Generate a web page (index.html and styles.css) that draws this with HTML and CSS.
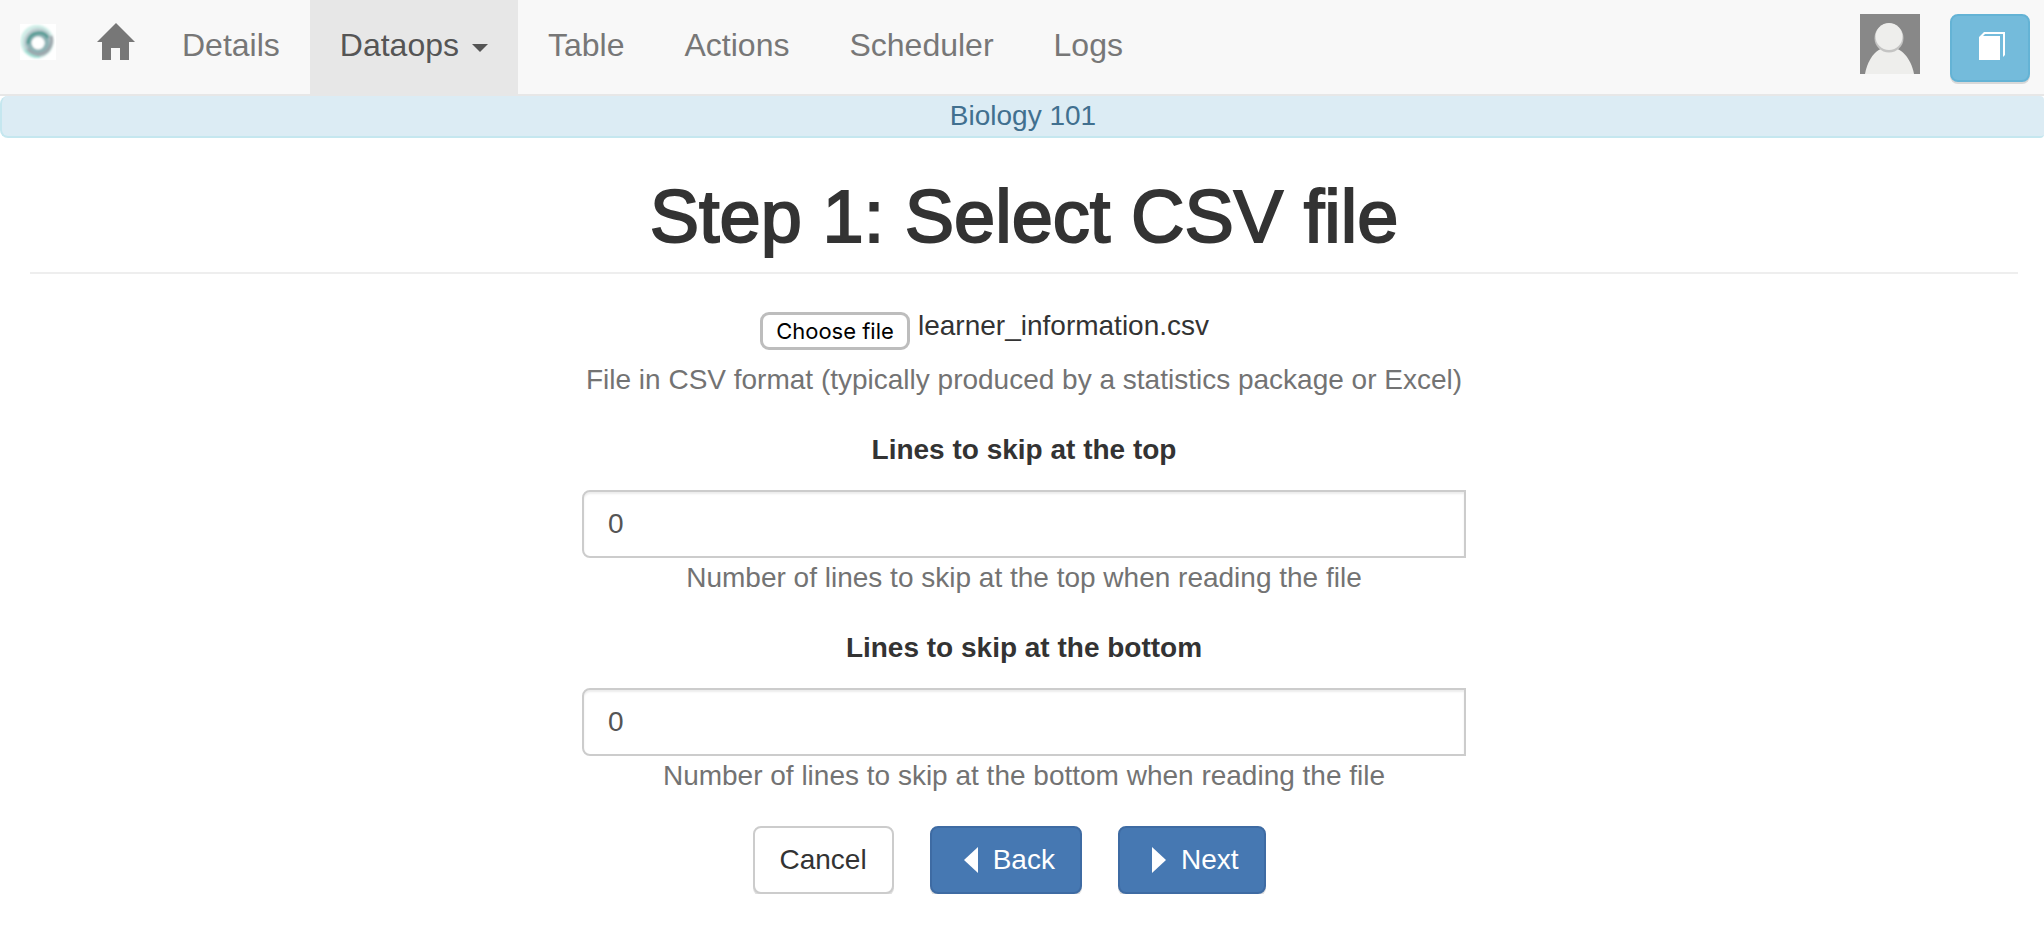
FILE: index.html
```html
<!DOCTYPE html>
<html lang="en">
<head>
<meta charset="utf-8">
<title>Step 1: Select CSV file</title>
<link rel="stylesheet" href="styles.css">
</head>
<body>
<nav class="navbar">
  <a class="brand" href="#" aria-label="Start">
    <svg width="36" height="36" viewBox="0 0 36 36">
      <defs><filter id="soft"><feGaussianBlur stdDeviation="1"/></filter></defs>
      <rect width="36" height="36" fill="#fff"/>
      <g fill="none" filter="url(#soft)">
        <circle cx="17" cy="17.500" r="15" stroke="#cdeee7" stroke-width="3"/>
        <circle cx="18" cy="18.500" r="12" stroke="#bccdd0" stroke-width="5"/>
        <circle cx="18" cy="19" r="9" stroke="#8fb3b5" stroke-width="5"/>
        <path d="M8 20a10 10 0 0 1 9-11q8-1 11 5" stroke="#559b94" stroke-width="3"/>
        <path d="M31 12a14 14 0 0 1-10 18q-8 2-13-5" stroke="#9da5ab" stroke-width="3"/>
        <path d="M5 26q7 8 15 7" stroke="#9eded3" stroke-width="2"/>
        <circle cx="18.500" cy="19" r="6" fill="#fff"/>
      </g>
    </svg>
  </a>
  <a class="home" href="#" aria-label="Home">
    <svg width="38" height="37" viewBox="0 0 38 37"><path fill="#777" d="M19 0L38 19H32V37H23V25H14V37H5V19H0Z"/></svg>
  </a>
  <a class="nav-link" href="#">Details</a>
  <a class="nav-link active" href="#" aria-haspopup="true">Dataops<span class="caret"></span></a>
  <a class="nav-link" href="#">Table</a>
  <a class="nav-link" href="#">Actions</a>
  <a class="nav-link" href="#">Scheduler</a>
  <a class="nav-link" href="#">Logs</a>
  <div class="nav-right">
    <a class="avatar" href="#" aria-label="Profile">
      <svg width="60" height="60" viewBox="0 0 60 60">
        <rect width="60" height="60" fill="#888"/>
        <path d="M5 60C8 44 17 33 29 33S51 44 54 60Z" fill="#eeeeec"/>
        <circle cx="29" cy="24" r="14.500" fill="#c4c4c3"/>
        <circle cx="29" cy="22.500" r="13.500" fill="#eeeeec"/>
      </svg>
    </a>
    <button class="btn btn-info" type="button" aria-label="Documentation">
      <svg width="26" height="28" viewBox="0 0 26 28"><path fill="#fff" d="M0 5L5 0H26V23L24 25V2H6L4 4H21V28H0Z"/></svg>
    </button>
  </div>
</nav>
<div class="context">Biology 101</div>
<main class="page">
  <h1 class="title">Step 1: Select CSV file</h1>
  <form class="form">
    <div class="file-row">
      <input class="file-input" id="csv" type="file" tabindex="-1" aria-label="CSV file">
      <button class="file-button" type="button">Choose file</button>
      <span class="file-name">learner_information.csv</span>
    </div>
    <p class="help help-file">File in CSV format (typically produced by a statistics package or Excel)</p>
    <div class="field">
      <label class="label" for="skip-top">Lines to skip at the top</label>
      <input class="control" id="skip-top" type="text" inputmode="numeric" value="0">
      <p class="help">Number of lines to skip at the top when reading the file</p>
    </div>
    <div class="field">
      <label class="label" for="skip-bottom">Lines to skip at the bottom</label>
      <input class="control" id="skip-bottom" type="text" inputmode="numeric" value="0">
      <p class="help">Number of lines to skip at the bottom when reading the file</p>
    </div>
    <div class="actions">
      <button class="btn btn-default" type="button">Cancel</button>
      <button class="btn btn-primary" type="button"><svg width="28" height="26" viewBox="0 0 28 26"><path fill="#fff" d="M21 0V26L7 13Z"/></svg>Back</button>
      <button class="btn btn-primary" type="submit"><svg width="28" height="26" viewBox="0 0 28 26"><path fill="#fff" d="M7 0V26L21 13Z"/></svg>Next</button>
    </div>
  </form>
</main>
</body>
</html>
```
FILE: styles.css
```css
* {
  box-sizing: border-box;
}

body {
  margin: 0;
  background: #fff;
  color: #333;
  font-family: "Liberation Sans", Arial, sans-serif;
  font-size: 28px;
  line-height: 40px;
}

svg {
  display: block;
  flex: none;
}

.navbar {
  display: flex;
  align-items: flex-start;
  padding: 0 14px 0 20px;
  background: #f8f8f8;
  border-bottom: 2px solid #e7e7e7;
}

.brand {
  padding-top: 24px;
}

.home {
  padding: 23px 17px 0 41px;
}

.nav-link {
  display: flex;
  align-items: center;
  padding: 25px 30px 29px;
  color: #777;
  font-size: 32px;
  text-decoration: none;
}

.nav-link.active {
  background: #e7e7e7;
  color: #555;
}

.caret {
  margin: 6px 0 0 13px;
  border: 8px solid transparent;
  border-top-color: #555;
  border-bottom: 0;
}

.nav-right {
  display: flex;
  gap: 30px;
  margin-left: auto;
  padding-top: 14px;
}

.context {
  background: #dcecf4;
  border: 2px solid #c5e7ef;
  border-top: 0;
  border-right: 0;
  border-radius: 8px 4px 4px 8px;
  color: #41708f;
  text-align: center;
}

.page {
  padding: 40px 26px 0 30px;
}

.title {
  margin: 0 0 32px;
  padding-bottom: 16px;
  border-bottom: 2px solid #eee;
  font-size: 74px;
  font-weight: 400;
  line-height: 78px;
  text-align: center;
  -webkit-text-stroke: 2px #333;
}

.form {
  max-width: 884px;
  margin: 0 auto;
  text-align: center;
}

.file-row {
  position: relative;
  display: flex;
  gap: 8px;
  max-width: 528px;
  height: 44px;
  margin: 0 auto;
}

.file-input {
  position: absolute;
  width: 1px;
  height: 1px;
  opacity: 0;
}

.file-button {
  align-self: flex-end;
  width: 150px;
  height: 38px;
  padding: 0;
  background: #fff;
  border: 3px solid #bdbdbd;
  border-radius: 9px;
  color: #000;
  font: 22px/32px Inter, sans-serif;
}

.help {
  margin: 0;
  color: #737373;
}

.help-file {
  margin-top: 10px;
}

.field {
  margin-top: 30px;
}

.label {
  display: block;
  margin-bottom: 20px;
  font-weight: 700;
}

.control {
  display: block;
  width: 100%;
  height: 68px;
  padding: 12px 24px;
  background: #fff;
  border: 2px solid #ccc;
  border-radius: 8px 0 0 8px;
  box-shadow: inset 0 2px 2px rgba(0, 0, 0, 0.075);
  color: #555;
  font: inherit;
}

.actions {
  display: flex;
  justify-content: center;
  gap: 36px;
  margin-top: 30px;
  padding-right: 30px;
}

.btn {
  display: flex;
  align-items: center;
  justify-content: center;
  gap: 8px;
  height: 68px;
  padding: 0 25px;
  border: 2px solid #ccc;
  border-radius: 8px;
  box-shadow: 0 2px 0 rgba(0, 0, 0, 0.13);
  font: inherit;
}

.btn-default {
  background: #fff;
  color: #333;
}

.btn-primary {
  background: #4678b2;
  border-color: #3e6ba3;
  color: #fff;
}

.btn-info {
  width: 80px;
  padding: 0 22px 4px 26px;
  background: #74bbdb;
  border-color: #64b3d5;
}
```
